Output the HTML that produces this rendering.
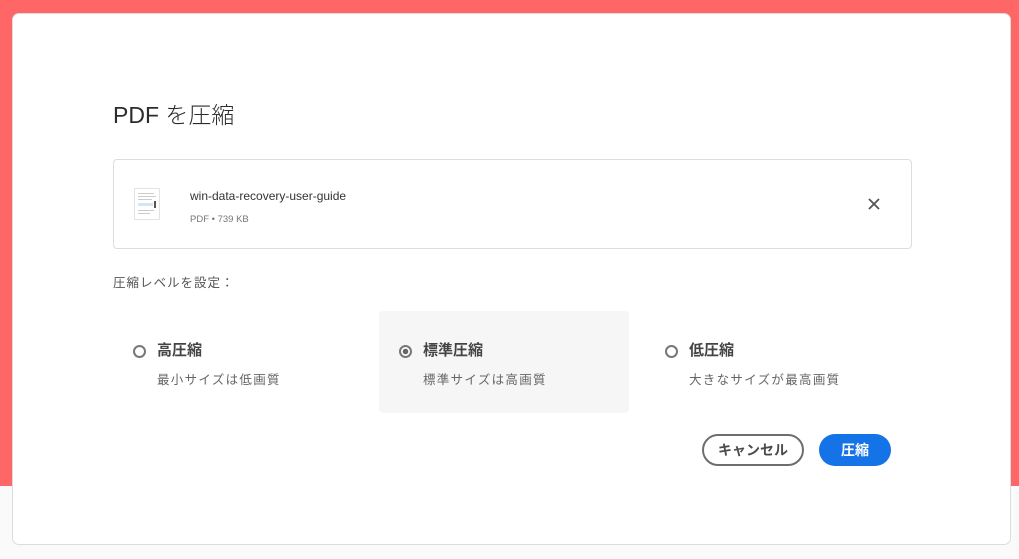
<!DOCTYPE html>
<html><head><meta charset="utf-8"><style>
*{margin:0;padding:0;box-sizing:border-box}
body{width:1019px;height:559px;position:relative;overflow:hidden;background:#fafafa;font-family:"Liberation Sans","Noto Sans CJK JP",sans-serif;color:#4b4b4b}
.red{position:absolute;left:0;top:0;width:1019px;height:486px;background:#ff6666}
.dlg{position:absolute;left:12px;top:13px;width:999px;height:532px;background:#fff;border:1px solid #dcdcdc;border-radius:7px}
.abs{position:absolute}
.title{left:100px;top:82px;font-size:23px;font-weight:300;color:#2c2c2c}
.file{left:100px;top:145px;width:799px;height:90px;border:1px solid #ddd;border-radius:4px}
.thumb{left:20px;top:28px;width:26px;height:32px;border:1px solid #e3e3e3;background:#fff}
.name{left:76px;top:29px;font-size:12px;color:#333}
.meta{left:76px;top:54px;font-size:9.5px;color:#777}
.lvl{left:100px;top:258px;font-size:12.5px;color:#555;letter-spacing:1px}
.opt{top:297px;width:250px;height:102px;border-radius:4px}
.opt .r{position:absolute;left:20px;top:34px;width:13px;height:13px;border:2px solid #777;border-radius:50%}
.opt .t{position:absolute;left:44px;top:28px;font-size:15px;font-weight:bold;color:#444}
.opt .s{position:absolute;left:44px;top:58px;font-size:12.5px;color:#666;letter-spacing:1.3px}
.btn{top:420px;height:32px;border-radius:16px;font-size:14px;font-weight:bold;text-align:center;line-height:28px}
</style></head><body>
<div class="red"></div>
<div class="dlg">
<div class="abs title">PDF を圧縮</div>
<div class="abs file">
 <div class="abs thumb"><svg width="24" height="30"><g fill="#ccc"><rect x="3" y="4" width="16" height="1"/><rect x="3" y="7" width="18" height="1"/><rect x="3" y="10" width="14" height="1"/><rect x="3" y="14" width="15" height="3" fill="#d8e4ef"/><rect x="19" y="12" width="2" height="7" fill="#555"/><rect x="3" y="21" width="16" height="1"/><rect x="3" y="24" width="12" height="1"/></g></svg></div>
 <div class="abs name">win-data-recovery-user-guide</div>
 <div class="abs meta">PDF • 739 KB</div>
 <svg class="abs" style="left:753px;top:37px" width="14" height="14"><path d="M2 2L12 12M12 2L2 12" stroke="#555" stroke-width="1.8"/></svg>
</div>
<div class="abs lvl">圧縮レベルを設定：</div>
<div class="abs opt" style="left:100px"><div class="r"></div><div class="t">高圧縮</div><div class="s">最小サイズは低画質</div></div>
<div class="abs opt" style="left:366px;background:#f6f6f6"><div class="r" style="background:radial-gradient(circle,#666 0 2.5px,#fff 3px)"></div><div class="t">標準圧縮</div><div class="s">標準サイズは高画質</div></div>
<div class="abs opt" style="left:632px"><div class="r"></div><div class="t">低圧縮</div><div class="s">大きなサイズが最高画質</div></div>
<div class="abs btn" style="left:689px;width:102px;border:2px solid #6e6e6e;color:#4b4b4b">キャンセル</div>
<div class="abs btn" style="left:806px;width:72px;background:#1473e6;color:#fff;line-height:32px">圧縮</div>
</div>
</body></html>
